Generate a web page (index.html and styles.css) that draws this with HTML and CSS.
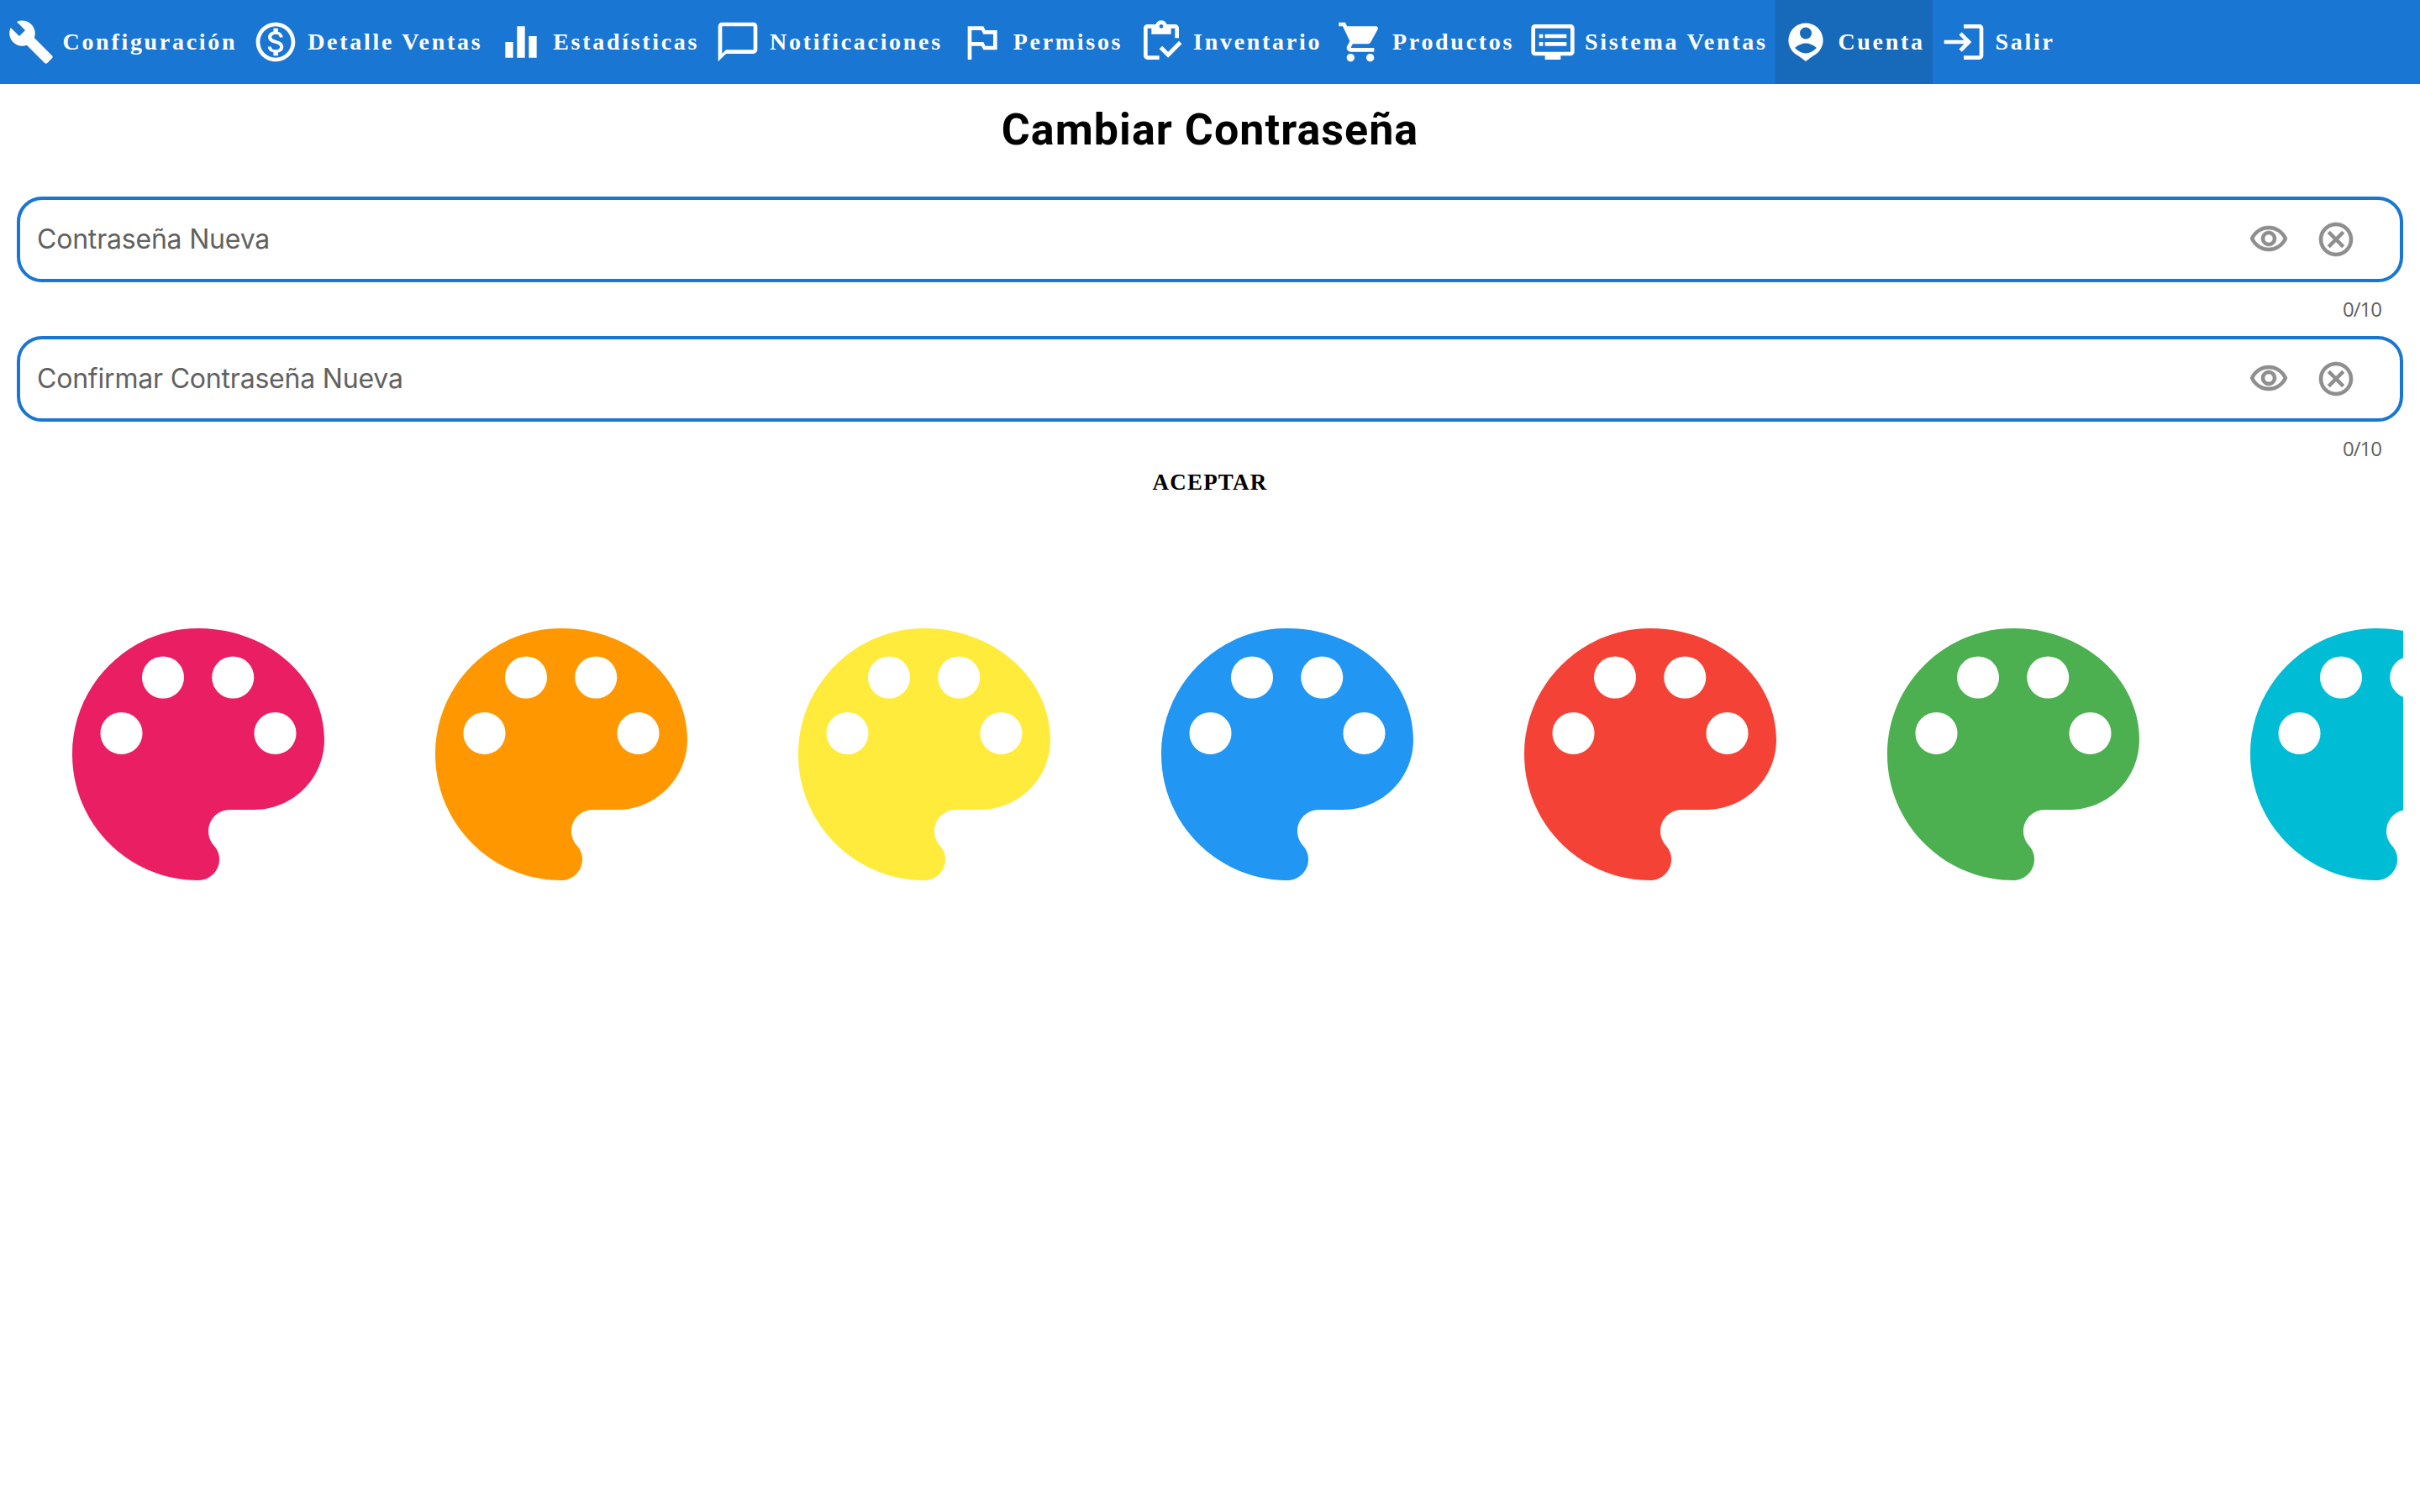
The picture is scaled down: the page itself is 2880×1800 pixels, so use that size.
FILE: index.html
```html
<!DOCTYPE html>
<html lang="es">
<head>
    <meta charset="UTF-8">
    <meta name="viewport" content="width=device-width, initial-scale=1.0">
    <title>Cambiar Contraseña</title>
    <link rel="stylesheet" href="styles.css">
</head>
<body>

<svg class="icon-defs" aria-hidden="true">
    <symbol id="palette" viewBox="0 0 24 24">
        <path fill-rule="evenodd" d="M12 2C6.49 2 2 6.49 2 12s4.49 10 10 10c.92 0 1.67-.75 1.67-1.67 0-.43-.17-.81-.44-1.1-.26-.3-.43-.7-.43-1.13 0-.92.75-1.7 1.67-1.7h1.97c3.07 0 5.56-2.49 5.56-5.56C22 5.96 17.51 2 12 2zM7.53 5.9a1.67 1.67 0 1 0 3.34 0 1.67 1.67 0 1 0-3.34 0zM13.08 5.9a1.67 1.67 0 1 0 3.34 0 1.67 1.67 0 1 0-3.34 0zM4.23 10.33a1.67 1.67 0 1 0 3.34 0 1.67 1.67 0 1 0-3.34 0zM16.43 10.33a1.67 1.67 0 1 0 3.34 0 1.67 1.67 0 1 0-3.34 0z"/>
    </symbol>
    <symbol id="eye" viewBox="0 0 24 24">
        <path d="M12 6c3.79 0 7.17 2.13 8.82 5.5C19.17 14.87 15.79 17 12 17s-7.17-2.13-8.82-5.5C4.83 8.13 8.21 6 12 6m0-2C7 4 2.73 7.11 1 11.5 2.73 15.89 7 19 12 19s9.27-3.11 11-7.5C21.27 7.11 17 4 12 4zm0 5c1.38 0 2.5 1.12 2.5 2.5S13.38 14 12 14s-2.5-1.12-2.5-2.5S10.62 9 12 9m0-2c-2.48 0-4.5 2.02-4.5 4.5S9.52 16 12 16s4.5-2.02 4.5-4.5S14.48 7 12 7z"/>
    </symbol>
    <symbol id="clear" viewBox="0 0 24 24">
        <path d="M15.6 7L12 10.6 8.4 7 7 8.4 10.6 12 7 15.6 8.4 17 12 13.4 15.6 17 17 15.6 13.4 12 17 8.4zM12 2C6.47 2 2 6.47 2 12s4.47 10 10 10 10-4.47 10-10S17.53 2 12 2zm0 18c-4.41 0-8-3.59-8-8s3.59-8 8-8 8 3.59 8 8-3.59 8-8 8z"/>
    </symbol>
</svg>

<nav class="tabs">
    <a class="tab" href="#">
        <svg class="tab-icon" viewBox="0 0 24 24"><path d="M22.7 19l-9.1-9.1c.9-2.3.4-5-1.5-6.9-2-2-5-2.4-7.4-1.3L9 6 6 9 1.6 4.7C.4 7.1.9 10.1 2.9 12.1c1.9 1.9 4.6 2.4 6.9 1.5l9.1 9.1c.4.4 1 .4 1.4 0l2.3-2.3c.5-.4.5-1.1.1-1.4z"/></svg>
        Configuración
    </a>
    <a class="tab" href="#">
        <svg class="tab-icon" viewBox="0 0 24 24"><path d="M12 2C6.48 2 2 6.48 2 12s4.48 10 10 10 10-4.48 10-10S17.52 2 12 2zm0 18c-4.41 0-8-3.59-8-8s3.59-8 8-8 8 3.59 8 8-3.59 8-8 8zm.31-8.86c-1.77-.45-2.34-.94-2.34-1.67 0-.84.79-1.43 2.1-1.43 1.38 0 1.9.66 1.94 1.64h1.71c-.05-1.34-.87-2.57-2.49-2.97V5H10.9v1.69c-1.51.32-2.72 1.3-2.72 2.81 0 1.79 1.49 2.69 3.66 3.21 1.95.46 2.34 1.15 2.34 1.87 0 .53-.39 1.39-2.1 1.39-1.6 0-2.23-.72-2.32-1.64H8.04c.1 1.7 1.36 2.66 2.86 2.97V19h2.34v-1.67c1.52-.29 2.72-1.16 2.73-2.77-.01-2.2-1.9-2.96-3.66-3.42z"/></svg>
        Detalle Ventas
    </a>
    <a class="tab" href="#">
        <svg class="tab-icon" viewBox="0 0 24 24"><path d="M10 20h4V4h-4v16zm-6 0h4v-8H4v8zM16 9v11h4V9h-4z"/></svg>
        Estadísticas
    </a>
    <a class="tab" href="#">
        <svg class="tab-icon" viewBox="0 0 24 24"><path d="M20 2H4c-1.1 0-2 .9-2 2v18l4-4h14c1.1 0 2-.9 2-2V4c0-1.1-.9-2-2-2zm0 14H6l-2 2V4h16v12z"/></svg>
        Notificaciones
    </a>
    <a class="tab" href="#">
        <svg class="tab-icon" viewBox="0 0 24 24"><path d="M14 6l-1-2H5v17h2v-7h5l1 2h7V6h-6zm4 8h-4l-1-2H7V6h5l1 2h5v6z"/></svg>
        Permisos
    </a>
    <a class="tab" href="#">
        <svg class="tab-icon" viewBox="0 0 24 24"><path d="M5 5h2v3h10V5h2v5h2V5c0-1.1-.9-2-2-2h-4.18C14.4 1.84 13.3 1 12 1s-2.4.84-2.82 2H5c-1.1 0-2 .9-2 2v14c0 1.1.9 2 2 2h6v-2H5V5zm7-2c.55 0 1 .45 1 1s-.45 1-1 1-1-.45-1-1 .45-1 1-1z"/><path d="M21 11.5 15.51 17l-3.01-3-1.5 1.5 4.51 4.5 6.99-7z"/></svg>
        Inventario
    </a>
    <a class="tab" href="#">
        <svg class="tab-icon" viewBox="0 0 24 24"><path d="M7 18c-1.1 0-1.99.9-1.99 2S5.9 22 7 22s2-.9 2-2-.9-2-2-2zM1 2v2h2l3.6 7.59-1.35 2.45c-.16.28-.25.61-.25.96 0 1.1.9 2 2 2h12v-2H7.42c-.14 0-.25-.11-.25-.25l.03-.12.9-1.63h7.45c.75 0 1.41-.41 1.75-1.03l3.58-6.49c.08-.14.12-.31.12-.48 0-.55-.45-1-1-1H5.21l-.94-2H1zm16 16c-1.1 0-1.99.9-1.99 2s.89 2 1.99 2 2-.9 2-2-.9-2-2-2z"/></svg>
        Productos
    </a>
    <a class="tab" href="#">
        <svg class="tab-icon" viewBox="0 0 24 24"><path d="M21 3H3c-1.1 0-2 .9-2 2v12c0 1.1.9 2 2 2h5v2h8v-2h5c1.1 0 1.99-.9 1.99-2L23 5c0-1.1-.9-2-2-2zm0 14H3V5h18v12zm-2-9H8v2h11V8zm0 4H8v2h11v-2zM7 8H5v2h2V8zm0 4H5v2h2v-2z"/></svg>
        Sistema Ventas
    </a>
    <a class="tab active" href="#">
        <svg class="tab-icon" viewBox="0 0 56 56"><path fill-rule="evenodd" d="M28 5.5a20.5 20.5 0 0 1 8 39.4L28 51l-8-6.1A20.5 20.5 0 0 1 28 5.5zM28 10.5a7 7 0 1 0 0 14 7 7 0 0 0 0-14zM15 35Q28 24 41 35Q28 48 15 35z"/></svg>
        Cuenta
    </a>
    <a class="tab" href="#">
        <svg class="tab-icon" viewBox="0 0 24 24"><path d="M11 7L9.6 8.4l2.6 2.6H2v2h10.2l-2.6 2.6L11 17l5-5-5-5zm9 12h-8v2h8c1.1 0 2-.9 2-2V5c0-1.1-.9-2-2-2h-8v2h8v14z"/></svg>
        Salir
    </a>
</nav>

<main class="content">
    <h1 class="title">Cambiar Contraseña</h1>

    <div class="field">
        <div class="field-box">
            <input class="field-input" type="password" placeholder="Contraseña Nueva">
            <svg class="field-icon"><use href="#eye"/></svg>
            <svg class="field-icon"><use href="#clear"/></svg>
        </div>
        <div class="field-count">0/10</div>
    </div>

    <div class="field">
        <div class="field-box">
            <input class="field-input" type="password" placeholder="Confirmar Contraseña Nueva">
            <svg class="field-icon"><use href="#eye"/></svg>
            <svg class="field-icon"><use href="#clear"/></svg>
        </div>
        <div class="field-count">0/10</div>
    </div>

    <button class="accept-btn">ACEPTAR</button>

    <div class="themes">
        <svg class="theme pink"><use href="#palette"/></svg>
        <svg class="theme orange"><use href="#palette"/></svg>
        <svg class="theme yellow"><use href="#palette"/></svg>
        <svg class="theme blue"><use href="#palette"/></svg>
        <svg class="theme red"><use href="#palette"/></svg>
        <svg class="theme green"><use href="#palette"/></svg>
        <svg class="theme cyan"><use href="#palette"/></svg>
    </div>
</main>

</body>
</html>
```

FILE: styles.css
```css
body {
    font-family: "Liberation Serif", serif;
    background-color: white;
    margin: 0;
    padding: 0;
}
.icon-defs {
    display: none;
}

/* barra superior */
.tabs {
    display: flex;
    height: 100px;
    background-color: #1976D2;
}
.tab {
    display: flex;
    align-items: center;
    gap: 10px;
    padding: 0 9.4px 0 8.5px;
    color: white;
    font-size: 28px;
    font-weight: bold;
    letter-spacing: 2.7px;
    text-decoration: none;
    white-space: nowrap;
}
.tab.active {
    background-color: #1769BA;
}
.tab-icon {
    width: 56px;
    height: 56px;
    flex: none;
    fill: white;
}

.content {
    padding: 0 20px;
}
.title {
    margin: 25px 0 49px;
    font-family: Roboto, sans-serif;
    font-size: 52px;
    line-height: 60px;
    font-weight: 700;
    letter-spacing: 1.05px;
    text-align: center;
    color: black;
}

/* campos */
.field + .field {
    margin-top: 16px;
}
.field-box {
    display: flex;
    align-items: center;
    gap: 32px;
    box-sizing: border-box;
    height: 102px;
    padding: 0 52px 0 20px;
    border: 4px solid #1976D2;
    border-radius: 30px;
}
.field-input {
    flex: 1;
    min-width: 0;
    padding: 0 0 2px;
    border: none;
    outline: none;
    font-family: Inter, sans-serif;
    font-size: 32px;
    letter-spacing: -0.2px;
    color: #616161;
}
.field-input::placeholder {
    color: #616161;
    opacity: 1;
}
.field-icon {
    width: 48px;
    height: 48px;
    flex: none;
    fill: #8E8E8E;
    stroke: #8E8E8E;
    stroke-width: 0.3;
}
.field-count {
    margin: 16px 26px 0 0;
    font-family: "Open Sans", sans-serif;
    font-size: 24px;
    line-height: 32px;
    letter-spacing: -1px;
    text-align: right;
    color: #616161;
}

.accept-btn {
    display: block;
    margin: 8px auto 0;
    padding: 0;
    border: none;
    background: none;
    cursor: pointer;
    font-family: "Liberation Serif", serif;
    font-size: 27px;
    line-height: 32px;
    font-weight: bold;
    letter-spacing: 1.2px;
    color: black;
}

/* paletas de color */
.themes {
    display: flex;
    margin-top: 128px;
    overflow: hidden;
}
.theme {
    width: 360px;
    height: 360px;
    flex: none;
    margin: 0 36px;
}
.pink { fill: #E91E63; }
.orange { fill: #FF9800; }
.yellow { fill: #FFEB3B; }
.blue { fill: #2196F3; }
.red { fill: #F44336; }
.green { fill: #4CAF50; }
.cyan { fill: #00BCD4; }
```
